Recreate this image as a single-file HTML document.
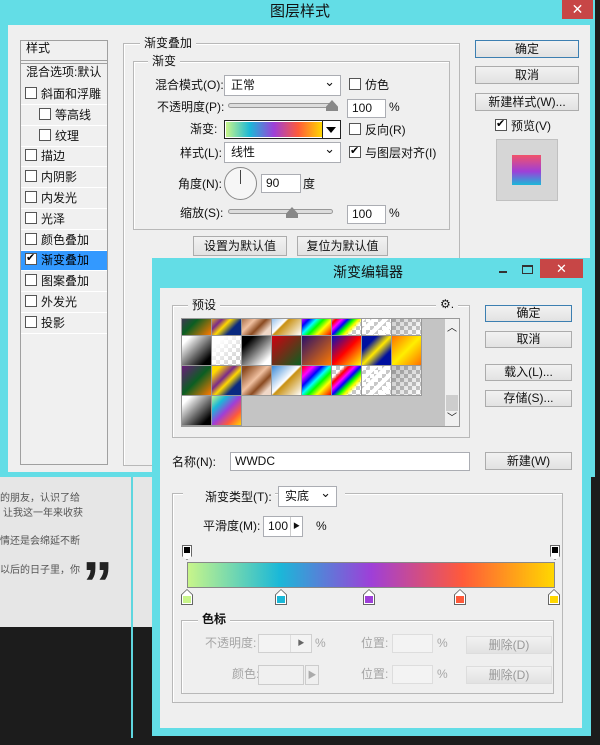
<!DOCTYPE html>
<html><head><meta charset="utf-8"><style>
*{box-sizing:border-box;margin:0;padding:0}
body{width:600px;height:745px;overflow:hidden;background:#1c1c1c;position:relative;font-family:"Liberation Sans","Noto Sans CJK SC",sans-serif;font-size:12px;color:#111}
.a{position:absolute}
.t{position:absolute;white-space:nowrap;line-height:14px}
.cb{position:absolute;width:12px;height:12px;border:1px solid #555;background:#fff}
.cb.on::after{content:"✔";position:absolute;left:0px;top:-3px;font-size:11px;color:#000}
.btn{position:absolute;border:1px solid #acacac;background:linear-gradient(#f2f2f2,#e2e2e2);text-align:center;line-height:16px;font-size:12px}
.inp{position:absolute;background:#fff;border:1px solid #abadb3;line-height:16px;padding-left:4px}
.sel{position:absolute;background:#fff;border:1px solid #abadb3;line-height:19px;padding-left:6px}
.sel::after{content:"⌄";position:absolute;right:5px;top:-4px;font-size:13px}
.fs{position:absolute;border:1px solid #b8b8b8;box-shadow:1px 1px 0 #fff inset}
.lg{position:absolute;background:#efefef;padding:0 4px;line-height:14px}
.dis{color:#a6a6a6}
.sw{position:absolute;width:30px;height:30px;border-right:1px solid #999;border-bottom:1px solid #999}
</style></head><body>
<div class="a" style="left:0;top:476px;width:152px;height:151px;background:#e6e6e6"></div>
<div class="t" style="left:0;top:492px;font-size:10px;color:#555">的朋友，认识了给</div>
<div class="t" style="left:3px;top:507px;font-size:10px;color:#555">让我这一年来收获</div>
<div class="t" style="left:0;top:535px;font-size:10px;color:#555">情还是会绵延不断</div>
<div class="t" style="left:0;top:564px;font-size:10px;color:#555">以后的日子里，你</div>
<div class="t" style="left:82px;top:554px;font-size:62px;font-weight:bold;color:#222;line-height:62px;font-family:'Liberation Sans',sans-serif">”</div>
<div class="a" style="left:131px;top:476px;width:2px;height:262px;background:#5fd6df"></div>

<div class="a" style="left:0;top:0;width:595px;height:477px;background:#63dde6"></div>
<div class="t" style="left:270px;top:4px;font-size:15px;line-height:16px">图层样式</div>
<div class="a" style="left:562px;top:0;width:31px;height:19px;background:#c74646;color:#fff;text-align:center;font-size:14px;line-height:18px">✕</div>
<div class="a" style="left:8px;top:25px;width:582px;height:447px;background:#efefef"></div>

<div class="a" style="left:20px;top:40px;width:88px;height:425px;border:1px solid #a0a0a0;background:#f0f0f0"></div>
<div class="t" style="left:26px;top:41px">样式</div>
<div class="a" style="left:21px;top:60px;width:86px;height:4px;border-top:1px solid #a0a0a0;border-bottom:1px solid #a0a0a0"></div>
<div class="t" style="left:26px;top:65px">混合选项:默认</div>
<div class="a" style="left:21px;top:250px;width:86px;height:21px;background:#3399ff"></div>
<div id="rows"></div>

<div class="fs" style="left:123px;top:43px;width:337px;height:423px"></div>
<div class="lg" style="left:140px;top:36px">渐变叠加</div>
<div class="fs" style="left:133px;top:61px;width:317px;height:169px"></div>
<div class="lg" style="left:148px;top:54px">渐变</div>

<div class="t" style="left:155px;top:78px">混合模式(O):</div>
<div class="sel" style="left:224px;top:75px;width:117px;height:21px">正常</div>
<div class="cb" style="left:349px;top:78px"></div><div class="t" style="left:365px;top:78px">仿色</div>

<div class="t" style="left:157px;top:100px">不透明度(P):</div>
<div class="a" style="left:228px;top:103px;width:108px;height:5px;border:1px solid #999;border-radius:3px;background:#ddd"></div>
<div class="a" style="left:326px;top:100px;width:12px;height:11px;clip-path:polygon(50% 0,100% 60%,100% 100%,0 100%,0 60%);background:#888"></div>
<div class="inp" style="left:347px;top:99px;width:39px;height:19px">100</div>
<div class="t" style="left:389px;top:100px">%</div>

<div class="t" style="left:190px;top:122px">渐变:</div>
<div class="a" style="left:224px;top:120px;width:117px;height:19px;border:1px solid #222;background:#fff"></div>
<div class="a" style="left:226px;top:122px;width:96px;height:15px;background:linear-gradient(90deg,#c8f58a,#1ab8d8 25%,#9e3fd8 50%,#ff5a3a 75%,#ffd700)"></div>
<div class="a" style="left:322px;top:121px;width:18px;height:17px;background:#fff;border-left:1px solid #222"></div>
<div class="a" style="left:326px;top:127px;width:0;height:0;border:5px solid transparent;border-top:6px solid #000"></div>
<div class="cb" style="left:349px;top:123px"></div><div class="t" style="left:365px;top:123px">反向(R)</div>

<div class="t" style="left:180px;top:146px">样式(L):</div>
<div class="sel" style="left:224px;top:142px;width:117px;height:21px">线性</div>
<div class="cb on" style="left:349px;top:146px"></div><div class="t" style="left:365px;top:146px">与图层对齐(I)</div>

<div class="t" style="left:178px;top:177px">角度(N):</div>
<div class="a" style="left:224px;top:167px;width:33px;height:33px;border:1px solid #888;border-radius:50%;background:#f6f6f6"></div>
<div class="a" style="left:240px;top:170px;width:1px;height:14px;background:#444"></div>
<div class="inp" style="left:261px;top:174px;width:40px;height:19px">90</div>
<div class="t" style="left:303px;top:177px">度</div>

<div class="t" style="left:180px;top:206px">缩放(S):</div>
<div class="a" style="left:228px;top:209px;width:105px;height:5px;border:1px solid #999;border-radius:3px;background:#ddd"></div>
<div class="a" style="left:286px;top:207px;width:12px;height:11px;clip-path:polygon(50% 0,100% 60%,100% 100%,0 100%,0 60%);background:#888"></div>
<div class="inp" style="left:347px;top:205px;width:39px;height:19px">100</div>
<div class="t" style="left:389px;top:206px">%</div>

<div class="btn" style="left:193px;top:236px;width:94px;height:20px;line-height:18px">设置为默认值</div>
<div class="btn" style="left:297px;top:236px;width:91px;height:20px;line-height:18px">复位为默认值</div>

<div class="btn" style="left:475px;top:40px;width:104px;height:18px;border-color:#3c7fb1">确定</div>
<div class="btn" style="left:475px;top:66px;width:104px;height:18px">取消</div>
<div class="btn" style="left:475px;top:93px;width:104px;height:18px">新建样式(W)...</div>
<div class="cb on" style="left:495px;top:119px"></div><div class="t" style="left:511px;top:119px">预览(V)</div>
<div class="a" style="left:496px;top:139px;width:62px;height:62px;background:#d6d6d6;border:1px solid #c0c0c0"></div>
<div class="a" style="left:512px;top:155px;width:29px;height:30px;background:linear-gradient(#f2536a,#9e3fd8 55%,#1ab8d8)"></div>

<div class="a" style="left:152px;top:258px;width:439px;height:478px;background:#63dde6"></div>
<div class="t" style="left:333px;top:265px;font-size:14px">渐变编辑器</div>
<div class="a" style="left:499px;top:271px;width:8px;height:2px;background:#333"></div>
<div class="a" style="left:522px;top:265px;width:11px;height:9px;border:1px solid #333;border-top-width:2px"></div>
<div class="a" style="left:540px;top:259px;width:43px;height:19px;background:#c74646;color:#fff;text-align:center;font-size:13px;line-height:19px">✕</div>
<div class="a" style="left:160px;top:288px;width:422px;height:440px;background:#efefef"></div>

<div class="fs" style="left:172px;top:305px;width:298px;height:133px"></div>
<div class="lg" style="left:188px;top:298px">预设</div>
<div class="lg" style="left:436px;top:297px;font-size:12px">⚙.</div>
<div class="a" style="left:181px;top:318px;width:279px;height:109px;background:#c4c4c4;border:1px solid #999;overflow:hidden" id="grid"></div>
<div class="a" style="left:445px;top:319px;width:14px;height:107px;background:#f0f0f0"></div>
<div class="t" style="left:447px;top:322px;font-size:10px">︿</div>
<div class="a" style="left:446px;top:395px;width:12px;height:16px;background:#cdcdcd"></div>
<div class="t" style="left:447px;top:412px;font-size:10px">﹀</div>

<div class="t" style="left:172px;top:455px">名称(N):</div>
<div class="inp" style="left:230px;top:452px;width:240px;height:19px;line-height:17px">WWDC</div>
<div class="btn" style="left:485px;top:452px;width:87px;height:18px">新建(W)</div>

<div class="btn" style="left:485px;top:305px;width:87px;height:17px;line-height:15px;border-color:#3c7fb1">确定</div>
<div class="btn" style="left:485px;top:331px;width:87px;height:17px;line-height:15px">取消</div>
<div class="btn" style="left:485px;top:364px;width:87px;height:17px;line-height:15px">载入(L)...</div>
<div class="btn" style="left:485px;top:390px;width:87px;height:17px;line-height:15px">存储(S)...</div>

<div class="fs" style="left:172px;top:493px;width:391px;height:210px"></div>
<div class="a" style="left:183px;top:490px;width:92px;height:8px;background:#efefef"></div>
<div class="lg" style="left:337px;top:490px;width:6px;height:8px"></div>
<div class="t" style="left:205px;top:490px">渐变类型(T):</div>
<div class="sel" style="left:278px;top:486px;width:59px;height:21px">实底</div>

<div class="t" style="left:203px;top:519px">平滑度(M):</div>
<div class="inp" style="left:263px;top:516px;width:40px;height:21px;line-height:19px">100</div>
<div class="a" style="left:290px;top:517px;width:12px;height:19px;border-left:1px solid #ccc;font-size:7px;line-height:19px;text-align:center">▶</div>
<div class="t" style="left:316px;top:519px">%</div>

<div class="a" style="left:182px;top:545px;width:10px;height:15px;background:#fff;border:1px solid #666;clip-path:polygon(0 0,100% 0,100% 75%,50% 100%,0 75%)"></div>
<div class="a" style="left:184px;top:547px;width:6px;height:6px;background:#000"></div>
<div class="a" style="left:550px;top:545px;width:10px;height:15px;background:#fff;border:1px solid #666;clip-path:polygon(0 0,100% 0,100% 75%,50% 100%,0 75%)"></div>
<div class="a" style="left:552px;top:547px;width:6px;height:6px;background:#000"></div>
<div class="a" style="left:187px;top:562px;width:368px;height:26px;border:1px solid #888;background:linear-gradient(90deg,#c8f58a,#1ab8d8 25%,#9e3fd8 50%,#ff5a3a 75%,#ffd700)"></div>
<div id="stops"></div>

<div class="fs" style="left:181px;top:620px;width:373px;height:74px"></div>
<div class="lg" style="left:198px;top:612px;font-weight:bold">色标</div>
<div class="t dis" style="left:205px;top:636px">不透明度:</div>
<div class="a" style="left:258px;top:634px;width:54px;height:19px;border:1px solid #d0d0d0;background:#f3f3f3"></div>
<div class="a dis" style="left:290px;top:635px;width:21px;height:17px;border-left:1px solid #ddd;font-size:7px;line-height:17px;text-align:center;color:#666">▶</div>
<div class="t dis" style="left:315px;top:636px">%</div>
<div class="t dis" style="left:361px;top:636px">位置:</div>
<div class="a" style="left:392px;top:634px;width:41px;height:19px;border:1px solid #ddd;background:#f3f3f3"></div>
<div class="t dis" style="left:437px;top:636px">%</div>
<div class="btn dis" style="left:466px;top:636px;width:86px;height:18px;border-color:#ddd;color:#999">删除(D)</div>
<div class="t dis" style="left:232px;top:667px">颜色:</div>
<div class="a" style="left:258px;top:665px;width:46px;height:20px;border:1px solid #ccc;background:#f0f0f0"></div>
<div class="a" style="left:305px;top:665px;width:14px;height:20px;border:1px solid #ccc;font-size:9px;line-height:18px;text-align:center;color:#aaa">▶</div>
<div class="t dis" style="left:361px;top:667px">位置:</div>
<div class="a" style="left:392px;top:665px;width:41px;height:19px;border:1px solid #ddd;background:#f3f3f3"></div>
<div class="t dis" style="left:437px;top:667px">%</div>
<div class="btn dis" style="left:466px;top:666px;width:86px;height:18px;border-color:#ddd;color:#999">删除(D)</div>

<script>
var names=["斜面和浮雕","等高线","纹理","描边","内阴影","内发光","光泽","颜色叠加","渐变叠加","图案叠加","外发光","投影"];
var h="";
names.forEach(function(n,i){var y=84+i*20.8;var ind=(i==1||i==2)?14:0;
h+='<div class="a" style="left:21px;top:'+(y+20)+'px;width:86px;height:1px;background:#fff"></div>';
h+='<div class="cb'+(i==8?' on':'')+'" style="left:'+(25+ind)+'px;top:'+(y+3)+'px"></div>';
h+='<div class="t" style="left:'+(41+ind)+'px;top:'+(y+3)+'px;'+(i==8?'color:#000':'')+'">'+n+'</div>';});
document.getElementById('rows').innerHTML=h;
var ck="repeating-conic-gradient(#c8c8c8 0 25%,#fff 0 50%) 0 0/8px 8px";
var A=["linear-gradient(135deg,#6a1b7a,#0b5e22 50%,#ff7a00)",
"linear-gradient(135deg,#ffd800 15%,#7a2a8a 40%,#ffd800 55%,#0a2a80 75%)",
"linear-gradient(135deg,#8a4a20 10%,#f0c0a0 45%,#8a4a20 65%,#f0d8c8 85%)",
"linear-gradient(135deg,#3a8ad8,#fff 48%,#c89010 52%,#fff)",
"linear-gradient(135deg,red,#f0f 20%,blue 35%,cyan 48%,lime 60%,yellow 75%,red)",
"linear-gradient(135deg,transparent 20%,red 30%,#f0f 40%,blue 50%,lime 60%,yellow 70%,transparent 80%),"+ck,
"repeating-linear-gradient(135deg,#fff 0 4px,transparent 4px 8px),"+ck,
"linear-gradient(135deg,rgba(0,0,0,.25),transparent),"+ck];
var B=["linear-gradient(135deg,#fff 15%,#000 85%)",
"linear-gradient(135deg,#fff 20%,transparent),"+ck,
"linear-gradient(135deg,#000 20%,#fff 85%)",
"linear-gradient(135deg,#d00010,#0b6020)",
"linear-gradient(135deg,#28106a,#ff7a00)",
"linear-gradient(135deg,#0010c0,red 50%,yellow)",
"linear-gradient(135deg,#0010a0 25%,#ffe800 50%,#0010a0 75%)",
"linear-gradient(135deg,#ff7000,#ffee00 50%,#ff7000)"];
var D=["linear-gradient(135deg,#fff 15%,#000 85%)","linear-gradient(135deg,#c8f58a,#1ab8d8 25%,#9e3fd8 50%,#ff5a3a 75%,#ffd700)"];
var g="";var rows=[[A,-13],[B,17],[A,47],[D,77]];
rows.forEach(function(r){r[0].forEach(function(bg,i){g+='<div class="sw" style="left:'+(i*30)+'px;top:'+r[1]+'px;background:'+bg+'"></div>';});});
document.getElementById('grid').innerHTML=g;
var s="";[[187,"#c8f58a"],[281,"#1ab8d8"],[369,"#9e3fd8"],[460,"#ff5a3a"],[554,"#ffd700"]].forEach(function(p){
s+='<div class="a" style="left:'+(p[0]-6)+'px;top:589px;width:12px;height:16px;background:#666;clip-path:polygon(50% 0,100% 35%,100% 100%,0 100%,0 35%)"></div>';
s+='<div class="a" style="left:'+(p[0]-5)+'px;top:590px;width:10px;height:14px;background:#fff;clip-path:polygon(50% 0,100% 35%,100% 100%,0 100%,0 35%)"></div>';
s+='<div class="a" style="left:'+(p[0]-4)+'px;top:596px;width:8px;height:7px;background:'+p[1]+'"></div>';});
document.getElementById('stops').innerHTML=s;
</script>
</body></html>
